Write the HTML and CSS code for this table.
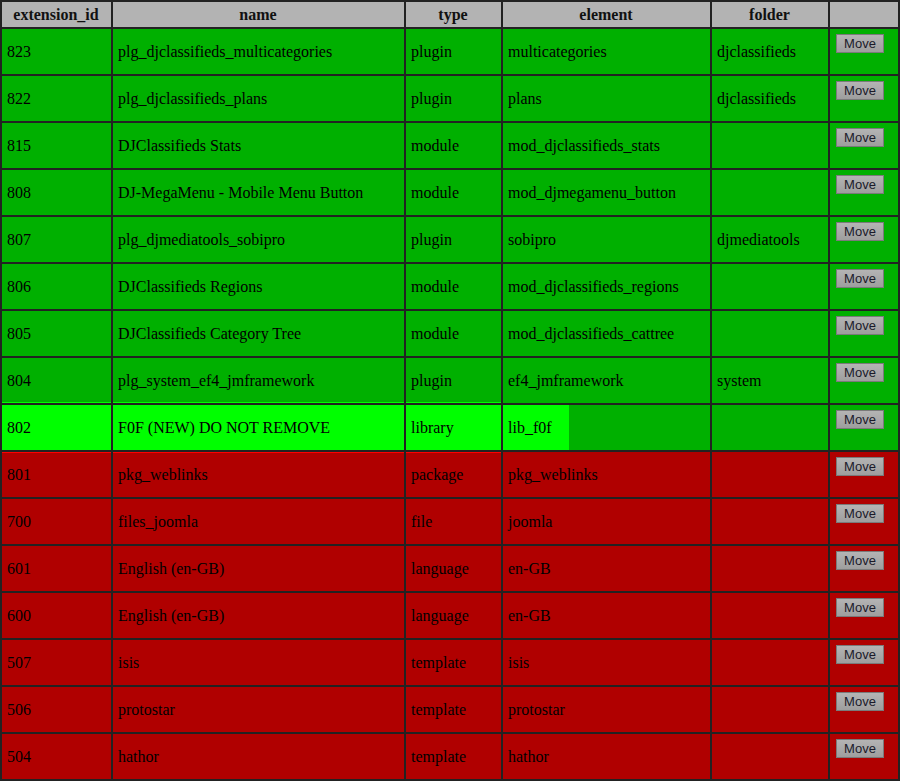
FILE: index.html
```html
<!DOCTYPE html>
<html>
<head>
<meta charset="utf-8">
<link rel="stylesheet" href="styles.css">
</head>
<body>
<table class="ext">
<thead>
<tr>
<th class="c-id">extension_id</th>
<th class="c-name">name</th>
<th class="c-type">type</th>
<th class="c-el">element</th>
<th class="c-folder">folder</th>
<th class="c-act"></th>
</tr>
</thead>
<tbody>
<tr class="ok"><td>823</td><td>plg_djclassifieds_multicategories</td><td>plugin</td><td>multicategories</td><td>djclassifieds</td><td class="act"><button class="move">Move</button></td></tr>
<tr class="ok"><td>822</td><td>plg_djclassifieds_plans</td><td>plugin</td><td>plans</td><td>djclassifieds</td><td class="act"><button class="move">Move</button></td></tr>
<tr class="ok"><td>815</td><td>DJClassifieds Stats</td><td>module</td><td>mod_djclassifieds_stats</td><td></td><td class="act"><button class="move">Move</button></td></tr>
<tr class="ok"><td>808</td><td>DJ-MegaMenu - Mobile Menu Button</td><td>module</td><td>mod_djmegamenu_button</td><td></td><td class="act"><button class="move">Move</button></td></tr>
<tr class="ok"><td>807</td><td>plg_djmediatools_sobipro</td><td>plugin</td><td>sobipro</td><td>djmediatools</td><td class="act"><button class="move">Move</button></td></tr>
<tr class="ok"><td>806</td><td>DJClassifieds Regions</td><td>module</td><td>mod_djclassifieds_regions</td><td></td><td class="act"><button class="move">Move</button></td></tr>
<tr class="ok"><td>805</td><td>DJClassifieds Category Tree</td><td>module</td><td>mod_djclassifieds_cattree</td><td></td><td class="act"><button class="move">Move</button></td></tr>
<tr class="ok before-hl"><td>804</td><td>plg_system_ef4_jmframework</td><td>plugin</td><td>ef4_jmframework</td><td>system</td><td class="act"><button class="move">Move</button></td></tr>
<tr class="ok hl"><td>802</td><td>F0F (NEW) DO NOT REMOVE</td><td>library</td><td class="part">lib_f0f</td><td></td><td class="act"><button class="move">Move</button></td></tr>
<tr class="bad after-hl"><td>801</td><td>pkg_weblinks</td><td>package</td><td class="part">pkg_weblinks</td><td></td><td class="act"><button class="move">Move</button></td></tr>
<tr class="bad"><td>700</td><td>files_joomla</td><td>file</td><td>joomla</td><td></td><td class="act"><button class="move">Move</button></td></tr>
<tr class="bad"><td>601</td><td>English (en-GB)</td><td>language</td><td>en-GB</td><td></td><td class="act"><button class="move">Move</button></td></tr>
<tr class="bad"><td>600</td><td>English (en-GB)</td><td>language</td><td>en-GB</td><td></td><td class="act"><button class="move">Move</button></td></tr>
<tr class="bad"><td>507</td><td>isis</td><td>template</td><td>isis</td><td></td><td class="act"><button class="move">Move</button></td></tr>
<tr class="bad"><td>506</td><td>protostar</td><td>template</td><td>protostar</td><td></td><td class="act"><button class="move">Move</button></td></tr>
<tr class="bad"><td>504</td><td>hathor</td><td>template</td><td>hathor</td><td></td><td class="act"><button class="move">Move</button></td></tr>
</tbody>
</table>
</body>
</html>
```
FILE: styles.css
```css
html, body {
  margin: 0;
  padding: 0;
  background: #ffffff;
}
.ext {
  width: 900px;
  table-layout: fixed;
  border-collapse: separate;
  border-spacing: 2px;
  background: #222222;
  font-family: "Liberation Serif", "Times New Roman", serif;
  font-size: 16px;
  color: #000;
}
.ext th, .ext td {
  box-sizing: border-box;
  padding: 0 6px 0 5px;
}
.ext th {
  height: 25px;
  background: #b3b3b3;
  font-weight: bold;
  text-align: center;
  color: #111;
}
.c-id { width: 109px; }
.c-name { width: 291px; }
.c-type { width: 95px; }
.c-el { width: 207px; }
.c-folder { width: 116px; }
.c-act { width: 68px; }
.ext td {
  height: 45px;
  text-align: left;
  vertical-align: middle;
}
.ok td { background: #00b000; }
.bad td { background: #b00000; }
.hl td { background: #00ff00; }
.hl td.part {
  background: linear-gradient(to right, #00ff00 0, #00ff00 66px, #00b000 66px);
}
.hl td:nth-child(5), .hl td.act { background: #00b000; }
.before-hl td:nth-child(-n+3) { box-shadow: inset 0 -1px 0 #00ff00; }
.after-hl td:nth-child(-n+3) { box-shadow: inset 0 1px 0 #ff0000; }
.ext td.act {
  vertical-align: top;
  padding: 5px 0 0 6px;
}
.move {
  display: block;
  box-sizing: border-box;
  width: 48px;
  height: 19px;
  margin: 0;
  padding: 0;
  font-family: "Liberation Sans", Arial, sans-serif;
  font-size: 13px;
  line-height: 17px;
  color: #1a1a2a;
  background: linear-gradient(#b4b4b4, #9e9e9e);
  border: 1px solid #7a7a7a;
  border-radius: 0;
}
```
